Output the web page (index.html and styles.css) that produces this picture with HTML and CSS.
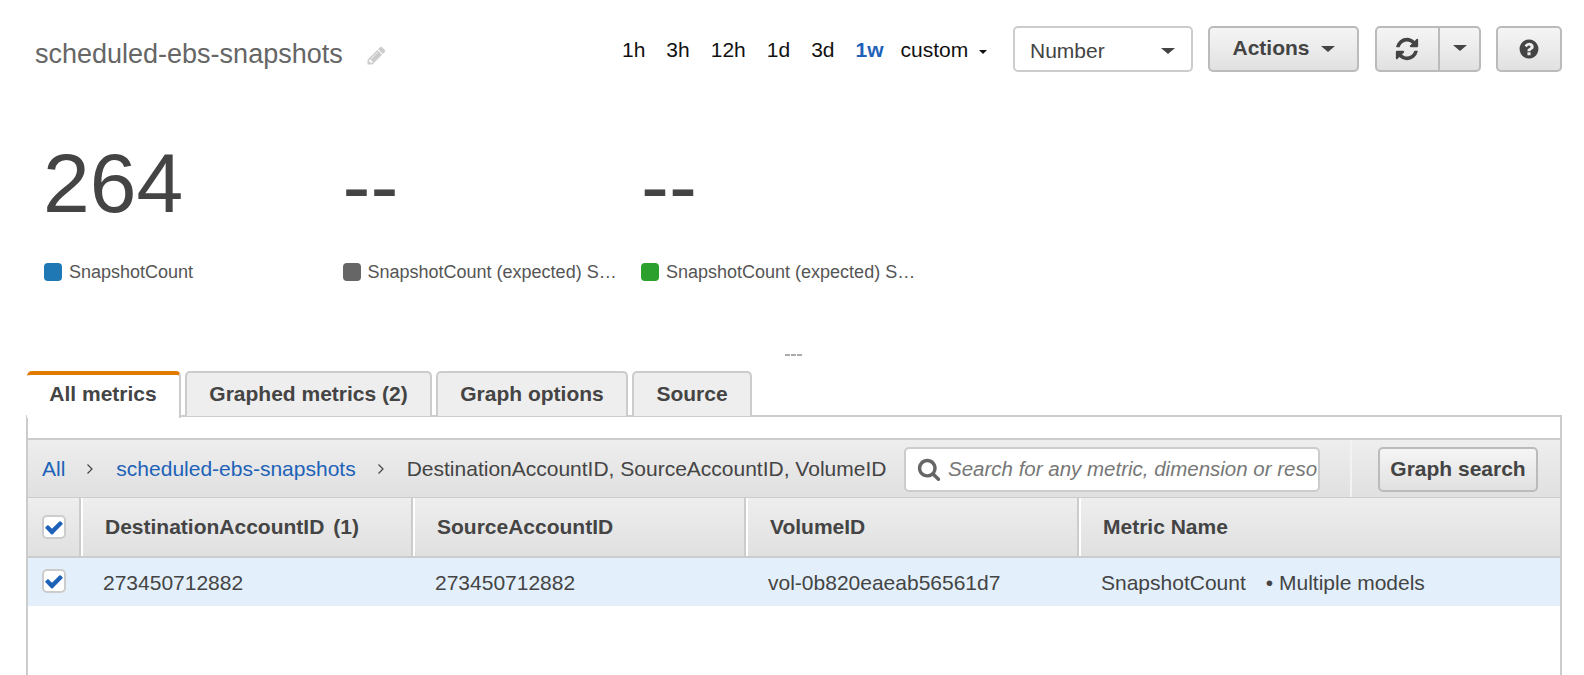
FILE: index.html
```html
<!DOCTYPE html>
<html lang="en">
<head>
<meta charset="utf-8">
<title>scheduled-ebs-snapshots</title>
<link rel="stylesheet" href="styles.css">
</head>
<body>
<header class="head">
  <div class="title-wrap">
    <h1 class="title">scheduled-ebs-snapshots</h1>
    <svg class="pencil" viewBox="0 0 1792 1792"><path d="M491 1536l91-91-235-235-91 91v107h128v128h107zm523-928q0-22-22-22-10 0-17 7l-542 542q-7 7-7 17 0 22 22 22 10 0 17-7l542-542q7-7 7-17zm-54-192l416 416-832 832h-416v-416zm683 96q0 53-37 90l-166 166-416-416 166-165q36-38 90-38 53 0 91 38l235 234q37 39 37 91z"/></svg>
  </div>
  <nav class="ranges">
    <span class="range">1h</span>
    <span class="range">3h</span>
    <span class="range">12h</span>
    <span class="range">1d</span>
    <span class="range">3d</span>
    <span class="range on">1w</span>
    <span class="range custom">custom<i class="caret small"></i></span>
  </nav>
  <div class="select">Number<i class="caret"></i></div>
  <button class="btn actions">Actions<i class="caret"></i></button>
  <div class="btn-group">
    <button class="btn refresh"><svg class="ico-refresh" viewBox="0 0 1792 1792"><path d="M1639 1056q0 5-1 7-64 268-268 434.5t-478 166.5q-146 0-282.5-55t-243.5-157l-129 129q-19 19-45 19t-45-19-19-45v-448q0-26 19-45t45-19h448q26 0 45 19t19 45-19 45l-137 137q71 66 161 102t187 36q134 0 250-65t186-179q11-17 53-117 8-23 30-23h192q13 0 22.5 9.5t9.5 22.5zm25-800v448q0 26-19 45t-45 19h-448q-26 0-45-19t-19-45 19-45l138-138q-148-137-349-137-134 0-250 65t-186 179q-11 17-53 117-8 23-30 23h-199q-13 0-22.5-9.5t-9.5-22.5v-7q65-268 270-434.5t480-166.5q146 0 284 55.5t245 156.5l130-129q19-19 45-19t45 19 19 45z"/></svg></button>
    <button class="btn more"><i class="caret"></i></button>
  </div>
  <button class="btn help"><svg class="ico-help" viewBox="0 0 1792 1792"><path d="M1024 1376v-192q0-14-9-23t-23-9h-192q-14 0-23 9t-9 23v192q0 14 9 23t23 9h192q14 0 23-9t9-23zm256-672q0-88-55.5-163t-138.5-116-170-41q-243 0-371 213-15 24 8 42l132 100q7 6 19 6 16 0 25-12 53-68 86-92 34-24 86-24 48 0 85.5 26t37.5 59q0 38-20 61t-68 45q-63 28-115.5 86.5t-52.5 125.5v36q0 14 9 23t23 9h192q14 0 23-9t9-23q0-19 21.5-49.5t54.5-49.5q32-18 49-28.5t46-35 44.5-48 28-60.5 12.5-81zm384 192q0 209-103 385.5t-279.5 279.5-385.5 103-385.5-103-279.5-279.5-103-385.5 103-385.5 279.5-279.5 385.5-103 385.5 103 279.5 279.5 103 385.5z"/></svg></button>
</header>

<section class="stats">
  <div class="stat">
    <div class="value">264</div>
    <div class="legend"><i class="swatch blue"></i><span class="legend-text">SnapshotCount</span></div>
  </div>
  <div class="stat">
    <div class="value dash">--</div>
    <div class="legend"><i class="swatch gray"></i><span class="legend-text">SnapshotCount (expected) SnapshotC</span></div>
  </div>
  <div class="stat">
    <div class="value dash">--</div>
    <div class="legend"><i class="swatch green"></i><span class="legend-text">SnapshotCount (expected) SnapshotC</span></div>
  </div>
</section>

<div class="handle"><span class="handle-mark"></span></div>

<div class="tabs">
  <div class="tab active t1">All metrics</div>
  <div class="tab t2">Graphed metrics (2)</div>
  <div class="tab t3">Graph options</div>
  <div class="tab t4">Source</div>
</div>

<main class="panel">
  <div class="panel-gap"></div>
  <div class="toolbar">
    <div class="crumbs">
      <a class="link">All</a>
      <svg class="chev" viewBox="0 0 8 12"><path d="M1.5 1.5 6 6l-4.500 4.500"/></svg>
      <a class="link">scheduled-ebs-snapshots</a>
      <svg class="chev" viewBox="0 0 8 12"><path d="M1.500 1.500 6 6l-4.500 4.500"/></svg>
      <span>DestinationAccountID, SourceAccountID, VolumeID</span>
    </div>
    <label class="search">
      <svg class="ico-search" viewBox="0 0 1792 1792"><path d="M1216 832q0-185-131.500-316.500t-316.500-131.500-316.500 131.500-131.500 316.500 131.500 316.500 316.500 131.500 316.500-131.500 131.500-316.500zm512 832q0 52-38 90t-90 38q-54 0-90-38l-343-342q-179 124-399 124-143 0-273.500-55.500t-225-150-150-225-55.500-273.500 55.500-273.500 150-225 225-150 273.500-55.500 273.500 55.500 225 150 150 225 55.500 273.500q0 220-124 399l343 343q37 37 37 90z"/></svg>
      <input class="search-input" type="text" placeholder="Search for any metric, dimension or resource id">
    </label>
    <div class="graph-search"><button class="btn gs">Graph search</button></div>
  </div>
  <div class="grid thead">
    <div class="cell check-cell"><span class="check"><svg viewBox="0 0 1792 1792"><path d="M1671 566q0 40-28 68l-724 724-136 136q-28 28-68 28t-68-28l-136-136-362-362q-28-28-28-68t28-68l136-136q28-28 68-28t68 28l294 295 656-657q28-28 68-28t68 28l136 136q28 28 28 68z"/></svg></span></div>
    <div class="cell th">DestinationAccountID<span class="count">(1)</span></div>
    <div class="cell th">SourceAccountID</div>
    <div class="cell th">VolumeID</div>
    <div class="cell th">Metric Name</div>
  </div>
  <div class="grid trow">
    <div class="cell check-cell"><span class="check row-check"><svg viewBox="0 0 1792 1792"><path d="M1671 566q0 40-28 68l-724 724-136 136q-28 28-68 28t-68-28l-136-136-362-362q-28-28-28-68t28-68l136-136q28-28 68-28t68 28l294 295 656-657q28-28 68-28t68 28l136 136q28 28 28 68z"/></svg></span></div>
    <div class="cell td">273450712882</div>
    <div class="cell td">273450712882</div>
    <div class="cell td">vol-0b820eaeab56561d7</div>
    <div class="cell td">SnapshotCount<span class="models">• Multiple models</span></div>
  </div>
</main>
</body>
</html>
```
FILE: styles.css
```css
* { box-sizing: border-box; }
html, body { margin: 0; height: 675px; overflow: hidden; background: #fff; }
body { font-family: "Liberation Sans", Arial, sans-serif; color: #444; }
button { font-family: inherit; }

.head { display: flex; align-items: flex-start; height: 130px; padding: 26px 22px 0 35px; }
.title-wrap { display: flex; align-items: center; flex: none; width: 587px; height: 56px; }
.title { margin: 0; font-size: 27px; font-weight: 400; color: #666; line-height: 56px; white-space: nowrap; }
.pencil { width: 21px; height: 21px; margin: 2px 0 0 23px; fill: #ccc; }

.ranges { display: flex; flex: none; align-items: center; gap: 21px; width: 391px; height: 48px; font-size: 21px; color: #111; }
.range { white-space: nowrap; }
.on { color: #1d62b8; font-weight: 700; margin-right: -4px; }

.caret { display: inline-block; width: 0; height: 0; margin-left: 11px; border-style: solid; border-width: 6px 7px 0; border-color: #444 transparent transparent; vertical-align: 3px; }
.caret.small { border-width: 4px 4.500px 0; border-top-color: #111; vertical-align: 3px; margin-left: 11px; }

.select { display: flex; flex: none; align-items: center; justify-content: space-between; width: 180px; height: 46px; padding: 3px 16px 0 15px; border: 2px solid #ccc; border-radius: 5px; font-size: 21px; color: #444; background: #fff; }
.btn { border: 2px solid #bbb; border-radius: 5px; background: linear-gradient(#f5f5f5, #e1e1e1); color: #444; font-weight: 700; font-size: 21px; padding: 0; }
.actions { flex: none; width: 151px; height: 46px; margin-left: 15px; padding-bottom: 2px; }
.btn-group { display: flex; flex: none; margin-left: 16px; }
.refresh { display: flex; align-items: center; justify-content: center; width: 64px; height: 46px; border-radius: 5px 0 0 5px; border-right-width: 1px; padding: 0 1px 1px 0; }
.more { width: 42px; height: 46px; border-radius: 0 5px 5px 0; border-left: 1px solid #bbb; padding-bottom: 4px; }
.more .caret { margin-left: 0; }
.help { display: flex; flex: none; align-items: center; justify-content: center; width: 66px; height: 46px; margin-left: 15px; padding-bottom: 1px; }
.ico-refresh { width: 26px; height: 26px; fill: #444; }
.ico-help { width: 22px; height: 22px; fill: #444; }

.stats { display: flex; height: 167px; padding-left: 44px; }
.stat { width: 298.500px; }
.value { height: 107px; margin: 0 0 26px -1px; font-size: 84px; line-height: 107px; color: #444; }
.dash { margin-left: 0; line-height: 113px; }
.legend { display: flex; align-items: center; height: 18px; }
.swatch { flex: none; width: 18px; height: 18px; border-radius: 4px; }
.blue { background: #1f77b4; }
.gray { background: #666; }
.green { background: #2ca02c; }
.legend-text { width: 250px; margin-left: 7px; font-size: 18px; line-height: 22px; white-space: nowrap; overflow: hidden; text-overflow: ellipsis; color: #555; }

.handle { display: flex; justify-content: flex-end; height: 74px; padding: 57px 782px 0 0; }
.handle-mark { width: 17px; height: 2px; background: repeating-linear-gradient(90deg, #aaa 0 5px, transparent 5px 6px); }

.tabs { display: flex; gap: 4px; height: 45px; padding-left: 27px; position: relative; z-index: 1; }
.tab { height: 45px; background: #eee; border: 2px solid #ccc; border-bottom: 0; border-radius: 5px 5px 0 0; font-size: 21px; font-weight: 700; color: #444; text-align: center; line-height: 42px; white-space: nowrap; }
.t1 { width: 154px; }
.t2 { width: 247px; }
.t3 { width: 192px; }
.t4 { width: 120px; }
.tab.active { height: 47px; background: #fff; border-top: 4px solid #e07b00; border-left: 0; line-height: 38px; }

.panel { height: 260px; margin: -1px 22px 0 26px; border: 2px solid #ccc; border-bottom: 0; }
.panel-gap { height: 23px; border-bottom: 2px solid #ccc; }
.toolbar { display: flex; align-items: center; height: 58px; padding-top: 1px; border-bottom: 1px solid #ccc; background: linear-gradient(#eee, #e0e0e0); }
.crumbs { display: flex; flex: none; align-items: center; width: 876px; padding-left: 14px; font-size: 21px; color: #444; white-space: nowrap; }
.link { color: #1d62b8; }
.chev { flex: none; width: 8px; height: 12px; margin: 0 22px 0 21px; fill: none; stroke: #444; stroke-width: 1.200; }
.search { display: flex; flex: none; align-items: center; width: 416px; height: 45px; padding-left: 11px; border: 2px solid #ccc; border-radius: 5px; background: #fff; overflow: hidden; }
.ico-search { flex: none; width: 24px; height: 24px; fill: #666; }
.search-input { flex: 1; min-width: 0; height: 36px; margin-left: 7px; padding: 0; border: 0; outline: 0; background: none; font: italic 20.500px "Liberation Sans", Arial, sans-serif; color: #666; }
.search-input::placeholder { color: #777; opacity: 1; }
.graph-search { display: flex; align-items: center; flex: none; align-self: stretch; margin: -1px 0 0 30px; padding-left: 26px; border-left: 2px solid #f2f2f2; }
.gs { width: 160px; height: 45px; margin-top: 1px; font-size: 21px; }

.grid { display: grid; grid-template-columns: 51px 332px 333px 333px 1fr; }
.thead { height: 60px; border-bottom: 2px solid #ccc; background: linear-gradient(#eee, #e0e0e0); }
.trow { height: 48px; background: #e3f0fc; }
.cell { display: flex; align-items: center; white-space: nowrap; }
.th { padding-left: 24px; font-size: 21px; font-weight: 700; color: #444; border-left: 2px solid #ccc; box-shadow: inset 2px 0 0 #fff; }
.count { margin-left: 9px; }
.td { padding: 2px 0 0 24px; font-size: 21px; color: #444; }
.check-cell { padding-left: 14px; }
.check { display: flex; align-items: center; justify-content: center; width: 24px; height: 24px; border: 2px solid #ccc; border-radius: 5px; background: #fff; }
.check svg { width: 21px; height: 21px; fill: #1d62b8; }
.row-check { margin-bottom: 2px; }
.models { margin-left: 20px; }
```
